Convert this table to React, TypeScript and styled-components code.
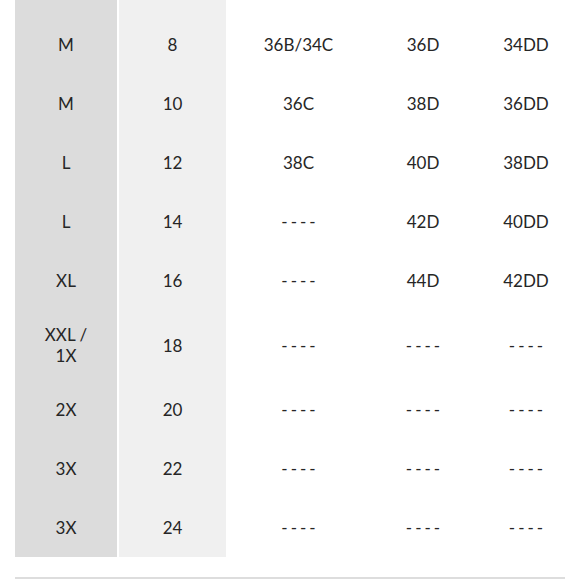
import React from 'react';
import styled, { createGlobalStyle } from 'styled-components';

type Row = { size: string; num: string; cups: string[]; tall?: boolean };

const rows: Row[] = [
  { size: 'M', num: '8', cups: ['36B/34C', '36D', '34DD'] },
  { size: 'M', num: '10', cups: ['36C', '38D', '36DD'] },
  { size: 'L', num: '12', cups: ['38C', '40D', '38DD'] },
  { size: 'L', num: '14', cups: ['', '42D', '40DD'] },
  { size: 'XL', num: '16', cups: ['', '44D', '42DD'] },
  { size: 'XXL /\n1X', num: '18', cups: ['', '', ''], tall: true },
  { size: '2X', num: '20', cups: ['', '', ''] },
  { size: '3X', num: '22', cups: ['', '', ''] },
  { size: '3X', num: '24', cups: ['', '', ''] },
];

const colWidths = [103, 108, 145, 104, 102];

export default function App() {
  return (
    <>
      <GlobalStyle />
      <Page>
        <Table>
          <colgroup>
            {colWidths.map((w, i) => (
              <col key={i} style={{ width: w }} />
            ))}
          </colgroup>
          <tbody>
            {/* tail of the header row, scrolled off the top */}
            <Row $height={15}>
              <Cell $tone="dark" />
              <Cell $tone="light" />
              <Cell />
              <Cell />
              <Cell />
            </Row>
            {rows.map((r, i) => (
              <Row key={i} $height={r.tall ? 70 : 59}>
                <Cell $tone="dark">
                  <Label>{r.size}</Label>
                </Cell>
                <Cell $tone="light">{r.num}</Cell>
                {r.cups.map((c, j) => (
                  <Cell key={j}>{c ? c : <Dashes>----</Dashes>}</Cell>
                ))}
              </Row>
            ))}
          </tbody>
        </Table>
        <Rule />
      </Page>
    </>
  );
}

const GlobalStyle = createGlobalStyle`
  html, body {
    margin: 0;
    padding: 0;
    background: #ffffff;
  }
  body {
    font-family: Lato, "Noto Sans", sans-serif;
    color: #222222;
  }
`;

const Page = styled.div`
  width: 580px;
  height: 580px;
  overflow: hidden;
  padding-left: 15px;
  box-sizing: border-box;
`;

const Table = styled.table`
  width: 562px;
  table-layout: fixed;
  border-collapse: collapse;
`;

const Row = styled.tr<{ $height: number }>`
  height: ${(p) => p.$height}px;
`;

const Cell = styled.td<{ $tone?: 'dark' | 'light' }>`
  padding: 0;
  text-align: center;
  vertical-align: middle;
  font-size: 17px;
  line-height: 21px;
  color: #262626;
  background: ${(p) =>
    p.$tone === 'dark' ? '#dcdcdc' : p.$tone === 'light' ? '#f0f0f0' : 'transparent'};
  border-right: ${(p) => (p.$tone === 'dark' ? '2px solid #ffffff' : 'none')};
`;

const Label = styled.span`
  white-space: pre-line;
`;

const Dashes = styled.span`
  letter-spacing: 3px;
  margin-right: -3px;
`;

const Rule = styled.div`
  width: 550px;
  height: 2px;
  margin-top: 20px;
  background: #dddddd;
`;
